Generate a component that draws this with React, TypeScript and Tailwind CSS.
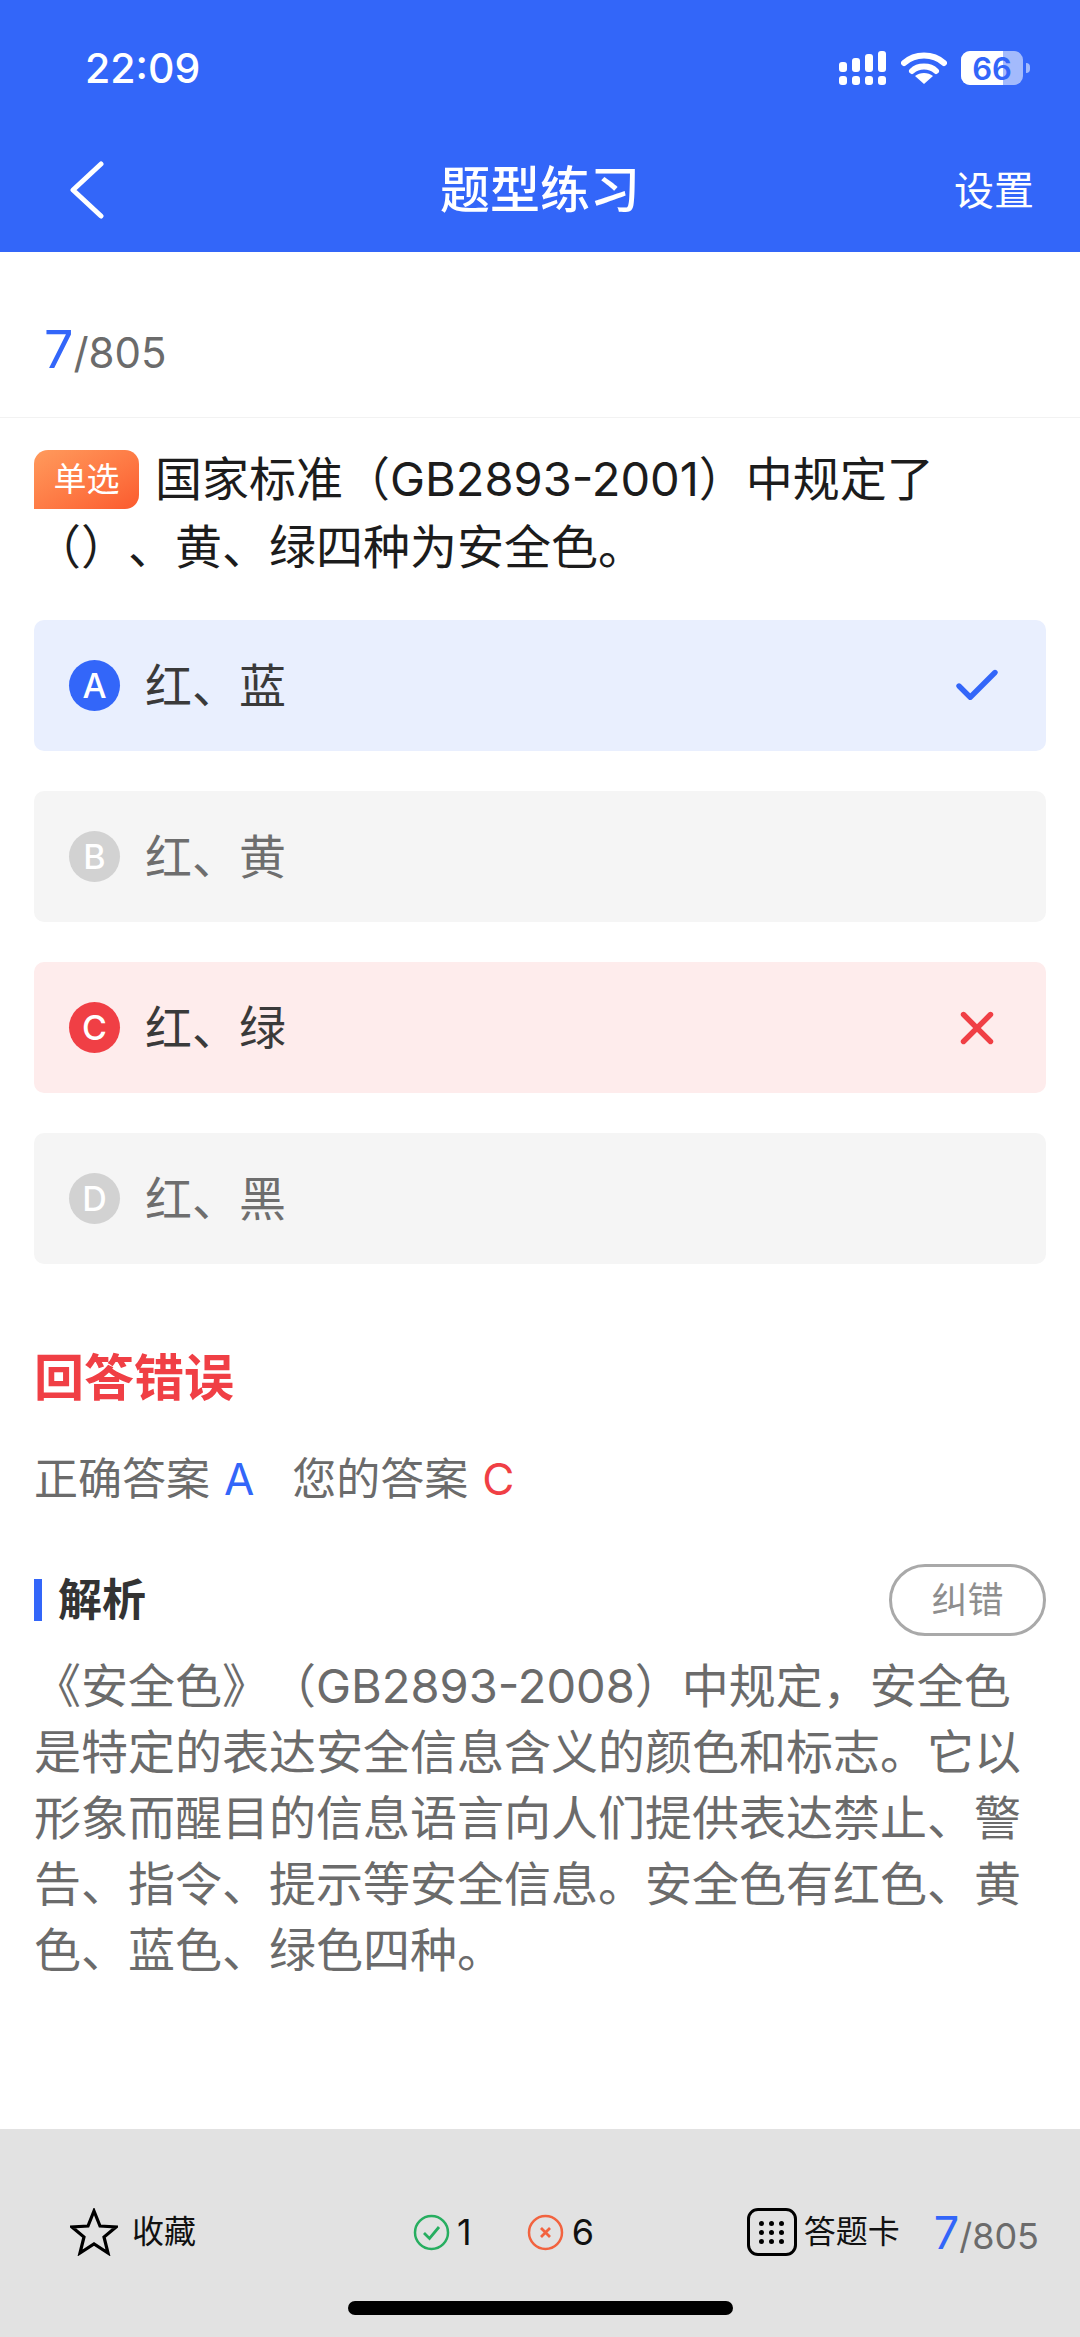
import { Check, X } from "lucide-react";

const FONT = "font-['Inter','Noto_Sans_CJK_SC',sans-serif] [text-spacing-trim:space-all]";

interface OptionProps {
  letter: string;
  text: string;
  state?: "correct" | "wrong";
}

function Option({ letter, text, state }: OptionProps) {
  const rowBg =
    state === "correct"
      ? "bg-[#e9effe]"
      : state === "wrong"
        ? "bg-[#feecec]"
        : "bg-[#f5f5f5]";
  const badge =
    state === "correct"
      ? "bg-[#3366f9]"
      : state === "wrong"
        ? "bg-[#f03f45]"
        : "bg-[#d2d2d2]";

  return (
    <div className={`flex h-[131px] items-center rounded-[10px] pl-[35px] pr-[42px] ${rowBg}`}>
      <span
        className={`flex h-[51px] w-[51px] shrink-0 items-center justify-center rounded-full text-[34px] font-medium text-white ${badge}`}
      >
        {letter}
      </span>
      <span
        className={`ml-[25px] text-[47px] leading-none ${state ? "text-[#3a3a3a]" : "text-[#6e6e6e]"}`}
      >
        {text}
      </span>
      <span className="ml-auto">
        {state === "correct" && <Check size={54} strokeWidth={2.4} className="text-[#3366f9]" />}
        {state === "wrong" && <X size={54} strokeWidth={2.4} className="text-[#f03f45]" />}
      </span>
    </div>
  );
}

function StatusIcons() {
  return (
    <div className="flex items-center">
      <svg width="47" height="34" viewBox="0 0 47 34" fill="white">
        <rect x="0" y="11" width="8" height="10" rx="3" />
        <rect x="13" y="7" width="8" height="14" rx="3" />
        <rect x="26" y="3" width="8" height="18" rx="3" />
        <rect x="39" y="0" width="8" height="21" rx="3" />
        <rect x="0" y="25" width="8" height="9" rx="3" />
        <rect x="13" y="25" width="8" height="9" rx="3" />
        <rect x="26" y="25" width="8" height="9" rx="3" />
        <rect x="39" y="25" width="8" height="9" rx="3" />
      </svg>
      <svg width="46" height="32" viewBox="0 0 46 32" fill="none" className="ml-[15px]">
        <path d="M3 11C14 1 32 1 43 11" stroke="white" strokeWidth="6" strokeLinecap="round" />
        <path d="M11 19C17 13 29 13 35 19" stroke="white" strokeWidth="6" strokeLinecap="round" />
        <path d="M23 32L14 24C19 20 27 20 32 24Z" fill="white" />
      </svg>
      <div className="relative ml-[14px] flex h-[34px] w-[62px] items-center justify-center overflow-hidden rounded-[9px] bg-white/55">
        <div className="absolute inset-y-0 left-0 w-[42px] bg-white" />
        <span className="relative text-[31px] font-semibold leading-none text-[#3366f9]">66</span>
      </div>
      <div className="ml-[3px] h-[10px] w-[4px] rounded-r-full bg-white/55" />
    </div>
  );
}

export default function App() {
  return (
    <div className={`flex h-[2337px] w-[1080px] flex-col bg-white ${FONT}`}>
      <header className="h-[252px] bg-[#3366f9] text-white">
        <div className="flex h-[136px] items-center justify-between pl-[85px] pr-[50px]">
          <span className="text-[41px] font-medium leading-none">22:09</span>
          <StatusIcons />
        </div>
        <div className="relative flex h-[108px] items-center justify-center">
          <svg
            width="36"
            height="58"
            viewBox="0 0 36 58"
            fill="none"
            className="absolute left-[68px] top-[25px]"
          >
            <path d="M33 3L5 29L33 55" stroke="white" strokeWidth="5" strokeLinecap="round" strokeLinejoin="round" />
          </svg>
          <span className="text-[50px] font-medium leading-none">题型练习</span>
          <span className="absolute right-[46px] top-[35px] text-[40px] leading-none">设置</span>
        </div>
      </header>

      <main className="flex-1">
        <div className="flex h-[166px] items-center border-b border-[#f2f2f2] pl-[44px] pt-[30px]">
          <span className="leading-none">
            <span className="text-[52px] text-[#3366f9]">7</span>
            <span className="text-[42px] text-[#6b6b6b]">/805</span>
          </span>
        </div>

        <div className="px-[34px]">
          <p className="mt-[27px] text-[47px] leading-[68px] text-[#1c1c1c]">
            <span className="mr-[16px] inline-flex h-[59px] w-[105px] items-center justify-center rounded-[14px] rounded-bl-none bg-gradient-to-br from-[#ff9a5c] to-[#fb5a2e] align-[5px] text-[33px] leading-none text-white">
              单选
            </span>
            国家标准（GB2893-2001）中规定了（）、黄、绿四种为安全色。
          </p>

          <div className="mt-[39px] flex flex-col gap-[40px]">
            <Option letter="A" text="红、蓝" state="correct" />
            <Option letter="B" text="红、黄" />
            <Option letter="C" text="红、绿" state="wrong" />
            <Option letter="D" text="红、黑" />
          </div>

          <h2 className="mt-[89px] text-[50px] font-bold leading-none text-[#f03f45]">回答错误</h2>

          <div className="mt-[54px] flex text-[44px] leading-none text-[#6b6b6b]">
            <span>正确答案</span>
            <span className="ml-[14px] text-[#3366f9]">A</span>
            <span className="ml-[38px]">您的答案</span>
            <span className="ml-[14px] text-[#f03f45]">C</span>
          </div>

          <div className="mt-[63px] flex items-center justify-between">
            <div className="flex items-center">
              <span className="h-[42px] w-[8px] bg-[#3366f9]" />
              <span className="ml-[16px] text-[44px] font-bold leading-none text-[#333333]">解析</span>
            </div>
            <span className="flex h-[72px] w-[157px] items-center justify-center rounded-full border-[3px] border-[#a9a9a9] text-[36px] leading-none text-[#8e8e8e]">
              纠错
            </span>
          </div>

          <p className="mt-[17px] w-[1012px] text-[47px] leading-[66px] text-[#6b6b6b]">
            《安全色》（GB2893-2008）中规定，安全色是特定的表达安全信息含义的颜色和标志。它以形象而醒目的信息语言向人们提供表达禁止、警告、指令、提示等安全信息。安全色有红色、黄色、蓝色、绿色四种。
          </p>
        </div>
      </main>

      <footer className="h-[208px] bg-[#e2e2e2] text-[#111111]">
        <div className="flex h-[172px] items-center pl-[70px] pr-[41px] pt-[34px]">
          <svg width="48" height="48" viewBox="0 0 48 48" fill="none">
            <path
              d="M24 3L30 18L46 19L34 29L38 45L24 36L10 45L14 29L2 19L18 18Z"
              stroke="black"
              strokeWidth="3.2"
              strokeLinejoin="miter"
            />
          </svg>
          <span className="ml-[14px] text-[32px] leading-none">收藏</span>

          <svg width="37" height="37" viewBox="0 0 37 37" fill="none" className="ml-[217px]">
            <circle cx="18.5" cy="18.5" r="16.5" stroke="#27ae60" strokeWidth="2.5" />
            <path d="M11 19L16.5 24.5L26 13" stroke="#27ae60" strokeWidth="2.8" />
          </svg>
          <span className="ml-[7px] text-[36px] leading-none">1</span>

          <svg width="37" height="37" viewBox="0 0 37 37" fill="none" className="ml-[55px]">
            <circle cx="18.5" cy="18.5" r="16.5" stroke="#f2633f" strokeWidth="2.5" />
            <path d="M14 14L23 23M23 14L14 23" stroke="#f2633f" strokeWidth="2.8" />
          </svg>
          <span className="ml-[8px] text-[36px] leading-none">6</span>

          <div className="ml-auto grid h-[48px] w-[50px] grid-cols-3 place-content-center justify-center gap-x-[5px] gap-y-[4px] rounded-[11px] border-[3.5px] border-black px-[9px]">
            {Array.from({ length: 9 }).map((_, i) => (
              <span key={i} className="h-[5px] w-[5px] rounded-full bg-black" />
            ))}
          </div>
          <span className="ml-[7px] text-[32px] leading-none">答题卡</span>
          <span className="ml-[34px] leading-none">
            <span className="text-[45px] text-[#3366f9]">7</span>
            <span className="text-[36px] text-[#6b6b6b]">/805</span>
          </span>
        </div>
        <div className="mx-auto h-[14px] w-[385px] rounded-full bg-black" />
      </footer>
    </div>
  );
}
